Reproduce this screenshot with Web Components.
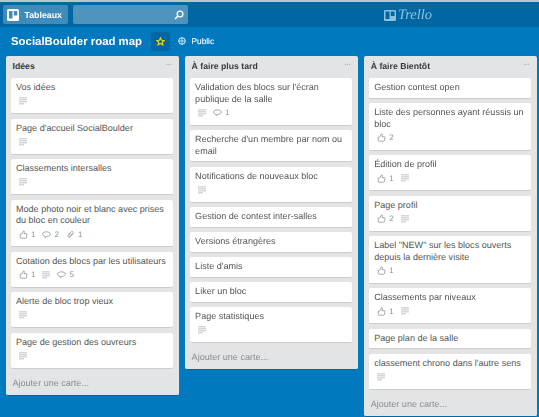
<!doctype html>
<html lang="fr">
<title>SocialBoulder road map</title>
<style>
  html, body { margin: 0; height: 100%; }
  body { background: #0079bf; overflow: hidden; font-family: "Liberation Sans", Arial, sans-serif; text-rendering: geometricPrecision; }
  body > * { filter: blur(.3px); }
</style>

<x-topbar></x-topbar>
<x-boardbar title-text="SocialBoulder road map"></x-boardbar>
<x-board>
  <x-list name="Idées">
    <x-card text="Vos idées" badges="desc"></x-card>
    <x-card text="Page d'accueil SocialBoulder" badges="desc"></x-card>
    <x-card text="Classements intersalles" badges="desc"></x-card>
    <x-card text="Mode photo noir et blanc avec prises du bloc en couleur" badges="like:1 comment:2 clip:1"></x-card>
    <x-card text="Cotation des blocs par les utilisateurs" badges="like:1 desc comment:5"></x-card>
    <x-card text="Alerte de bloc trop vieux" badges="desc"></x-card>
    <x-card text="Page de gestion des ouvreurs" badges="desc"></x-card>
  </x-list>
  <x-list name="À faire plus tard">
    <x-card text="Validation des blocs sur l'écran publique de la salle" badges="desc comment:1"></x-card>
    <x-card text="Recherche d'un membre par nom ou email"></x-card>
    <x-card text="Notifications de nouveaux bloc" badges="desc"></x-card>
    <x-card text="Gestion de contest inter-salles"></x-card>
    <x-card text="Versions étrangères"></x-card>
    <x-card text="Liste d'amis"></x-card>
    <x-card text="Liker un bloc"></x-card>
    <x-card text="Page statistiques" badges="desc"></x-card>
  </x-list>
  <x-list name="À faire Bientôt">
    <x-card text="Gestion contest open"></x-card>
    <x-card text="Liste des personnes ayant réussis un bloc" badges="like:2"></x-card>
    <x-card text="Édition de profil" badges="like:1 desc"></x-card>
    <x-card text="Page profil" badges="like:2 desc"></x-card>
    <x-card text="Label &quot;NEW&quot; sur les blocs ouverts depuis la dernière visite" badges="like:1"></x-card>
    <x-card text="Classements par niveaux" badges="like:1 desc"></x-card>
    <x-card text="Page plan de la salle"></x-card>
    <x-card text="classement chrono dans l'autre sens" badges="desc"></x-card>
  </x-list>
</x-board>

<script type="module">
  const ICONS = {
    desc: `<svg viewBox="0 0 8 8" width="8" height="8"><path d="M0 .4h8v.9H0zM0 2.400h8v.9H0zM0 4.400h8v.9H0zM0 6.400h5v.9H0z" fill="#a9aeb2"/></svg>`,
    like: `<svg viewBox="0 0 9 9" width="9" height="9"><path d="M1.200 4.200h1.200L4.600.8c.7 0 .9.6.7 1.300L5 3.700h2.300c.5 0 .8.4.7.9l-.6 3c-.1.4-.4.6-.8.6H2c-.5 0-.8-.3-.8-.8z" fill="none" stroke="#7f878b" stroke-width=".7"/></svg>`,
    comment: `<svg viewBox="0 0 9 9" width="9" height="9"><path d="M4.500 1.800C2.300 1.800.6 2.800.6 4.100s1.200 2.100 2.600 2.300L3 7.600l1.900-1.200c2-.1 3.500-1 3.500-2.300S6.700 1.800 4.500 1.800z" fill="none" stroke="#7f878b" stroke-width=".7"/></svg>`,
    clip: `<svg viewBox="0 0 9 9" width="9" height="9"><path d="M1.500 5.500 5.200 1.700c1-1 2.700.5 1.700 1.600L3.300 7c-.6.600-1.700-.3-1-1.100l3-3M3 8l4.500-4.500" fill="none" stroke="#a4aaae" stroke-width=".9"/></svg>`,
  };

  class Topbar extends HTMLElement {
    connectedCallback() {
      this.attachShadow({mode: 'open'}).innerHTML = `
        <style>
          :host { display: flex; align-items: center; gap: 5px; height: 25px;
                  padding: 0 2.500px; background: #0067a3; border-top: 2px solid #b9c4cb; position: relative; }
          .btn { display: flex; align-items: center; gap: 5.500px; height: 19.500px; border-radius: 2px;
                 background: #4d95bf; color: #fff; box-sizing: border-box; }
          .boards { width: 65px; padding-left: 4.500px; font: bold 8.800px "Liberation Sans", sans-serif; background: #3f8cba; }
          .search { width: 115px; justify-content: flex-end; padding-right: 3.500px; }
          .logo { position: absolute; left: 384px; top: 5px; display: flex; align-items: center; gap: 2px;
                  color: #8fc0dd; font: italic 14.500px "Liberation Serif", serif; }
        </style>
        <div class="btn boards">
          <svg viewBox="0 0 12 12" width="12" height="12"><rect width="12" height="12" rx="1.500" fill="#fff"/><rect x="2" y="2" width="3.500" height="7.500" fill="#3f8cba"/><rect x="6.800" y="2" width="3.500" height="4.500" fill="#3f8cba"/></svg>
          <span>Tableaux</span>
        </div>
        <div class="btn search">
          <svg viewBox="0 0 10 10" width="10" height="10"><circle cx="6" cy="4" r="2.900" fill="none" stroke="#fff" stroke-width="1.300"/><path d="M3.900 6.100 1 9" stroke="#fff" stroke-width="1.500"/></svg>
        </div>
        <div class="logo">
          <svg viewBox="0 0 12 11" width="12" height="11"><rect width="12" height="11" rx="1.300" fill="#8fc0dd"/><rect x="1.500" y="1.500" width="4" height="7.500" fill="#0067a3"/><rect x="6.800" y="1.500" width="3.800" height="4.500" fill="#0067a3"/></svg>
          <span>Trello</span>
        </div>`;
    }
  }
  customElements.define('x-topbar', Topbar);

  class Boardbar extends HTMLElement {
    connectedCallback() {
      this.attachShadow({mode: 'open'}).innerHTML = `
        <style>
          :host { display: flex; align-items: center; height: 29px; padding-left: 11px; color: #fff; }
          h1 { margin: 0; font: bold 11.400px "Liberation Sans", sans-serif; width: 140px; white-space: nowrap; }
          .star { width: 19px; height: 19px; background: #0067a3; border-radius: 2px; display: flex; align-items: center; justify-content: center; }
          .public { display: flex; align-items: center; gap: 5.500px; margin: 0 0 1px 8px; font: 8.300px "Liberation Sans", sans-serif; -webkit-text-stroke: .1px #fff; }
        </style>
        <h1>${this.getAttribute('title-text')}</h1>
        <div class="star"><svg viewBox="0 0 10 10" width="9" height="9"><path d="M5 .9 6.200 3.600l2.900.3L7 5.800l.6 2.900L5 7.200 2.400 8.700 3 5.800.9 3.900l2.900-.3z" fill="none" stroke="#f2d600" stroke-width="1.300"/></svg></div>
        <div class="public">
          <svg viewBox="0 0 9 9" width="8" height="8"><circle cx="4.500" cy="4.500" r="3.700" fill="none" stroke="#fff" stroke-width="1"/><path d="M.8 4.500h7.400M4.500.8v7.400" stroke="#fff" stroke-width=".8"/></svg>
          <span>Public</span>
        </div>`;
    }
  }
  customElements.define('x-boardbar', Boardbar);

  class Board extends HTMLElement {
    connectedCallback() {
      this.attachShadow({mode: 'open'}).innerHTML = `
        <style>
          :host { display: flex; align-items: flex-start; gap: 6.100px; padding-left: 5.500px; }
        </style>
        <slot></slot>`;
    }
  }
  customElements.define('x-board', Board);

  class List extends HTMLElement {
    connectedCallback() {
      this.attachShadow({mode: 'open'}).innerHTML = `
        <style>
          :host { display: block; width: 173px; flex: none; box-sizing: border-box; padding: 0 5.500px;
                  background: #e2e4e6; border-radius: 2px; border-bottom: 1px solid #0067a3;
                  color: #555; font: 9.050px/11.520px "Liberation Sans", sans-serif; }
          header { display: flex; justify-content: space-between; align-items: center; height: 22px;
                   padding: 0 1.500px; font-size: 8.700px; font-weight: bold; color: #3a3a3a; }
          .dots { color: #b0b5b9; font-size: 5px; letter-spacing: .2px; margin-top: -3px; font-weight: normal; }
          .cards { display: flex; flex-direction: column; gap: 4.500px; }
          footer { height: 26px; line-height: 28px; padding-left: 1.500px; color: #8c8c8c; }
        </style>
        <header><span>${this.getAttribute('name')}</span><span class="dots">•••</span></header>
        <div class="cards"><slot></slot></div>
        <footer>Ajouter une carte...</footer>`;
    }
  }
  customElements.define('x-list', List);

  class Card extends HTMLElement {
    connectedCallback() {
      const badges = (this.getAttribute('badges') || '').split(' ').filter(Boolean);
      const html = badges.map(b => {
        const [kind, n] = b.split(':');
        return `<span class="badge">${ICONS[kind]}${n ? `<span>${n}</span>` : ''}</span>`;
      }).join('');
      this.attachShadow({mode: 'open'}).innerHTML = `
        <style>
          :host { display: block; background: #fff; border-radius: 2px; border-bottom: 1px solid #ccc;
                  padding: 4.200px 5px 3.800px; box-sizing: border-box; }
          p { margin: 0; line-height: 11.520px; }
          .badges { display: flex; align-items: center; gap: 7px; height: 15.500px; padding-left: 3px; color: #8a9296; font-size: 8px; }
          .badge { display: flex; align-items: center; gap: 3px; }
        </style>
        <p>${this.getAttribute('text')}</p>
        ${badges.length ? `<div class="badges">${html}</div>` : ''}`;
    }
  }
  customElements.define('x-card', Card);
</script>
</html>
